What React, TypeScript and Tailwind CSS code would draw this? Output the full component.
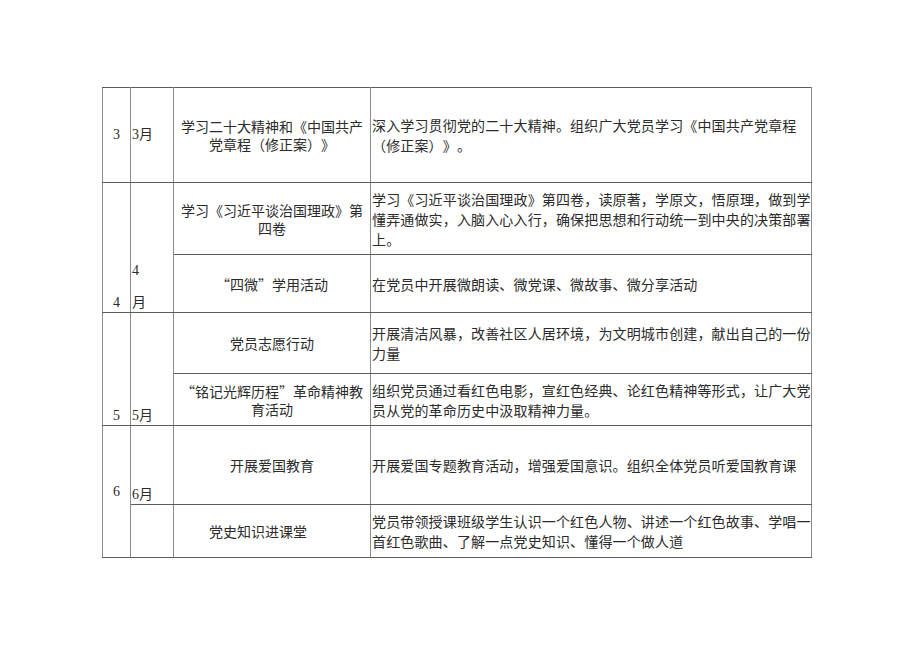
import React from "react";

const cjk = "font-['Noto_Sans_CJK_SC','Noto_Sans_CJK_SC',sans-serif]";
const serif = "font-['Liberation_Serif','Noto_Sans_CJK_SC',serif]";
const td = "p-0 border border-x-[#8c8c8c] border-y-[#5c5c5c]";
const c3 = `${td} ${cjk} text-center leading-[18px] align-middle`;
const c4 = `${td} ${cjk} text-left leading-[20px] align-middle pl-[1px] tracking-[0.15px]`;
const num = `${td} ${serif} text-center leading-[18px]`;
const mon = `${td} ${serif} text-left leading-[18px] pl-[1px]`;

export default function App() {
  return (
    <div className="w-[920px] h-[651px] bg-white pl-[102px] pt-[87px] text-[14px] text-[#2b2b2b] [text-spacing-trim:space-all]">
      <table className="table-fixed border-collapse w-[709px]">
        <colgroup>
          <col className="w-[28px]" />
          <col className="w-[43px]" />
          <col className="w-[197px]" />
          <col className="w-[441px]" />
        </colgroup>
        <tbody>
          <tr className="h-[95px]">
            <td className={`${num} align-middle`}>3</td>
            <td className={`${mon} align-middle`}>3月</td>
            <td className={c3}>
              学习二十大精神和《中国共产
              <br />
              党章程（修正案）》
            </td>
            <td className={c4}>
              深入学习贯彻党的二十大精神。组织广大党员学习《中国共产党章程（修正案）》。
            </td>
          </tr>
          <tr className="h-[72px]">
            <td rowSpan={2} className={`${num} align-bottom leading-[14px]`}>4</td>
            <td rowSpan={2} className={`${mon} align-bottom leading-[14px]`}>
              <div>4</div>
              <div className="mt-[14px]">月</div>
            </td>
            <td className={c3}>
              学习《习近平谈治国理政》第
              <br />
              四卷
            </td>
            <td className={c4}>
              学习《习近平谈治国理政》第四卷，读原著，学原文，悟原理，做到学懂弄通做实，入脑入心入行，确保把思想和行动统一到中央的决策部署上。
            </td>
          </tr>
          <tr className="h-[58px]">
            <td className={c3}>“四微”学用活动</td>
            <td className={c4}>在党员中开展微朗读、微党课、微故事、微分享活动</td>
          </tr>
          <tr className="h-[61px]">
            <td rowSpan={2} className={`${num} align-bottom leading-[14px]`}>5</td>
            <td rowSpan={2} className={`${mon} align-bottom leading-[14px]`}>5月</td>
            <td className={c3}>党员志愿行动</td>
            <td className={c4}>
              开展清洁风暴，改善社区人居环境，为文明城市创建，献出自己的一份力量
            </td>
          </tr>
          <tr className="h-[52px]">
            <td className={c3}>
              “铭记光辉历程”革命精神教
              <br />
              育活动
            </td>
            <td className={c4}>
              组织党员通过看红色电影，宣红色经典、论红色精神等形式，让广大党员从党的革命历史中汲取精神力量。
            </td>
          </tr>
          <tr className="h-[79px]">
            <td rowSpan={2} className={`${num} align-middle`}>6</td>
            <td className={`${mon} align-bottom leading-[14px]`}>6月</td>
            <td className={c3}>开展爱国教育</td>
            <td className={c4}>
              开展爱国专题教育活动，增强爱国意识。组织全体党员听爱国教育课
            </td>
          </tr>
          <tr className="h-[53px]">
            <td className={mon}></td>
            <td className={`${c3} pr-[28px]`}>党史知识进课堂</td>
            <td className={c4}>
              党员带领授课班级学生认识一个红色人物、讲述一个红色故事、学唱一首红色歌曲、了解一点党史知识、懂得一个做人道
            </td>
          </tr>
        </tbody>
      </table>
    </div>
  );
}
